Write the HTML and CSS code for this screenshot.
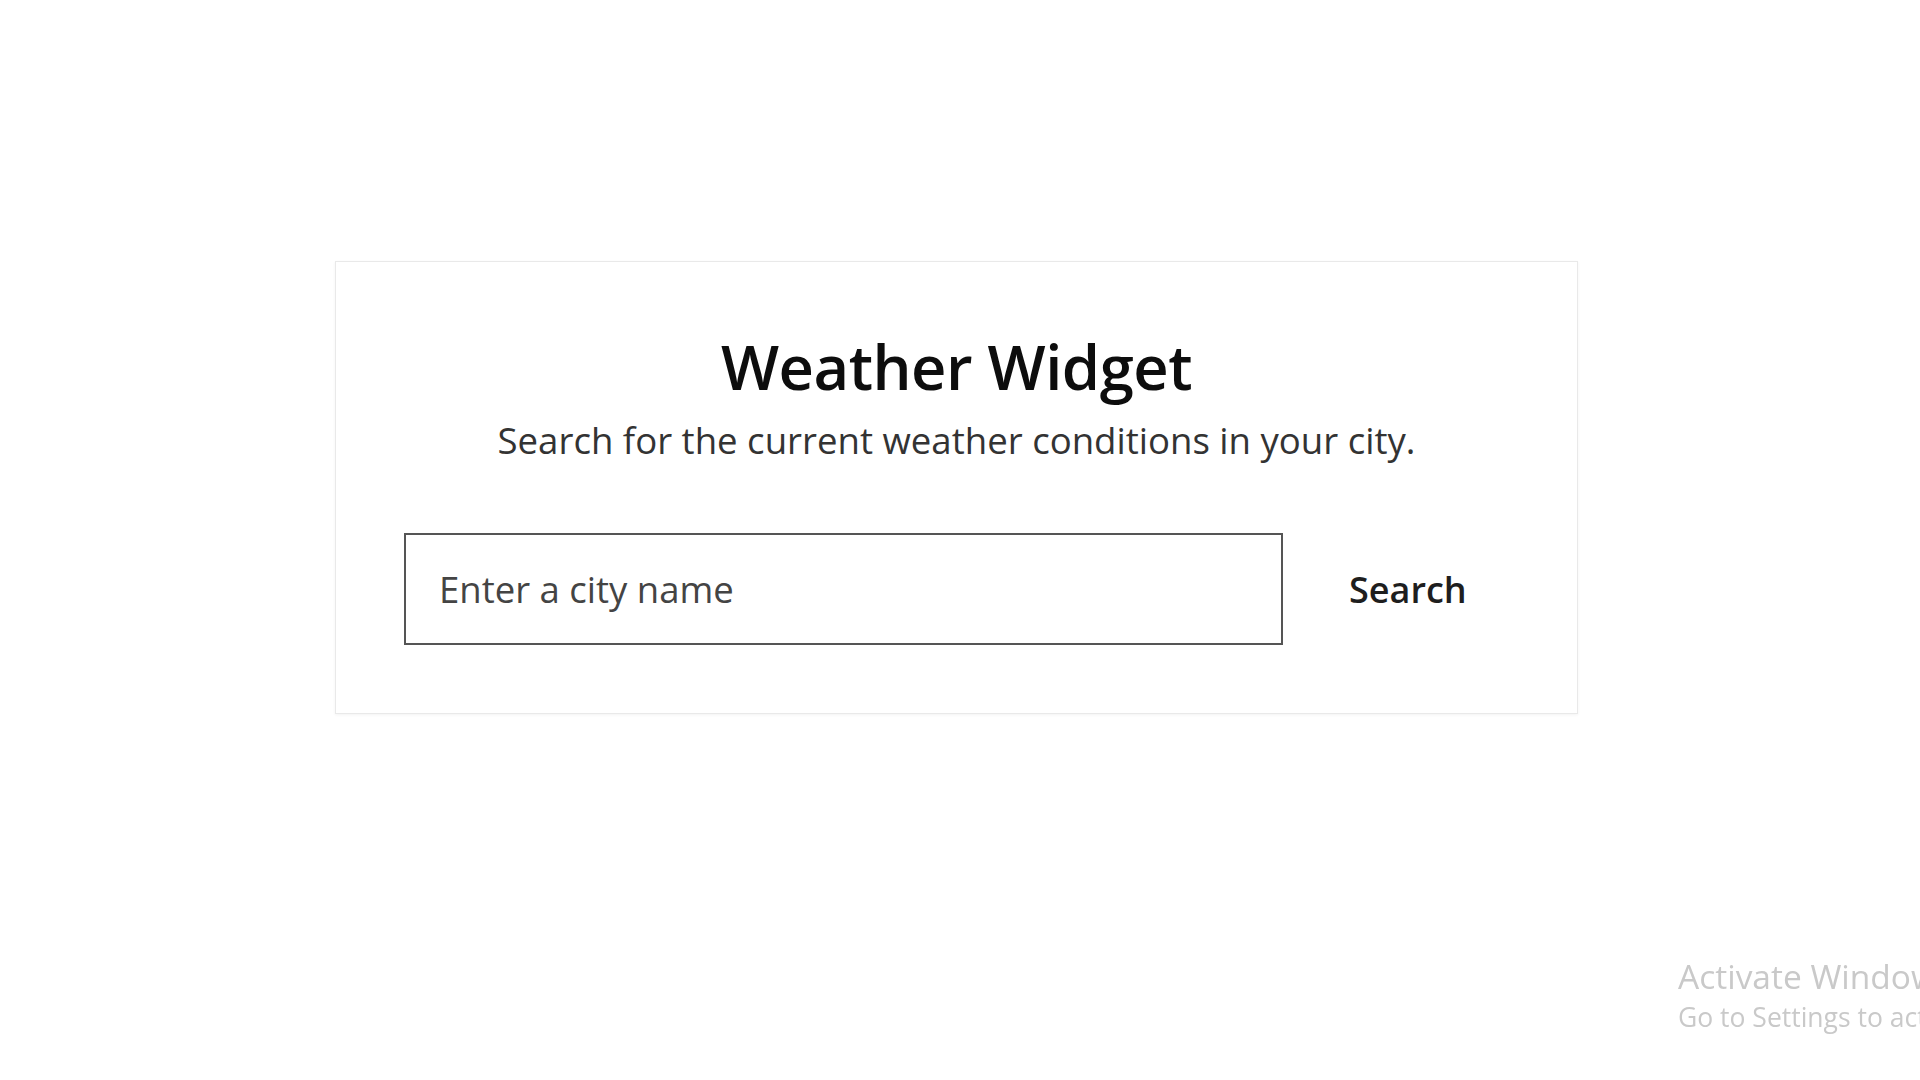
FILE: index.html
```html
<!DOCTYPE html>
<html lang="en">
<head>
<meta charset="utf-8">
<title>Weather Widget</title>
<link rel="stylesheet" href="styles.css">
</head>
<body>
  <main class="page">
    <section class="card">
      <h1 class="title">Weather Widget</h1>
      <p class="subtitle">Search for the current weather conditions in your city.</p>
      <form class="search" onsubmit="return false;">
        <input class="search-input" type="text" placeholder="Enter a city name">
        <button class="search-btn" type="submit">Search</button>
      </form>
    </section>
  </main>
  <div class="watermark">
    <div class="wm-title">Activate Windows</div>
    <div class="wm-sub">Go to Settings to activate Windows.</div>
  </div>
</body>
</html>
```
FILE: styles.css
```css
* { box-sizing: border-box; }
html, body {
  margin: 0;
  padding: 0;
  background: #ffffff;
  overflow: hidden;
  height: 100%;
}
body {
  font-family: "Open Sans", "Noto Sans", sans-serif;
  color: #111;
}
.page {
  padding-top: 261px;
  padding-left: 335px;
}
.card {
  width: 1243px;
  height: 453px;
  border: 1px solid #e9e9e9;
  box-shadow: 0 1px 3px rgba(0,0,0,0.05);
  background: #fff;
  padding: 0 68px;
  display: flex;
  flex-direction: column;
  align-items: center;
}
.title {
  margin: 67px 0 0;
  font-size: 61.5px;
  line-height: 74px;
  font-weight: 600;
  color: #0d0d0d;
  letter-spacing: -0.5px;
}
.subtitle {
  margin: 14px 0 0;
  font-size: 36.6px;
  line-height: 46px;
  color: #333;
}
.search {
  margin-top: 70px;
  width: 100%;
  display: flex;
  align-items: center;
}
.search-input {
  width: 879px;
  height: 112px;
  border: 2px solid #555;
  padding: 0 33px;
  font-family: inherit;
  font-size: 36.5px;
  color: #333;
  outline: none;
  background: #fff;
}
.search-input::placeholder { color: #444; }
.search-btn {
  margin-left: 66px;
  border: none;
  background: none;
  font-family: inherit;
  font-size: 36px;
  font-weight: 600;
  color: #1e1e1e;
  padding: 0;
  cursor: pointer;
}
.watermark {
  position: fixed;
  left: 1678px;
  top: 954px;
  white-space: nowrap;
  color: #c9c9c9;
}
.wm-title { font-size: 33.5px; line-height: 44px; }
.wm-sub { font-size: 26.5px; line-height: 38px; }
```
